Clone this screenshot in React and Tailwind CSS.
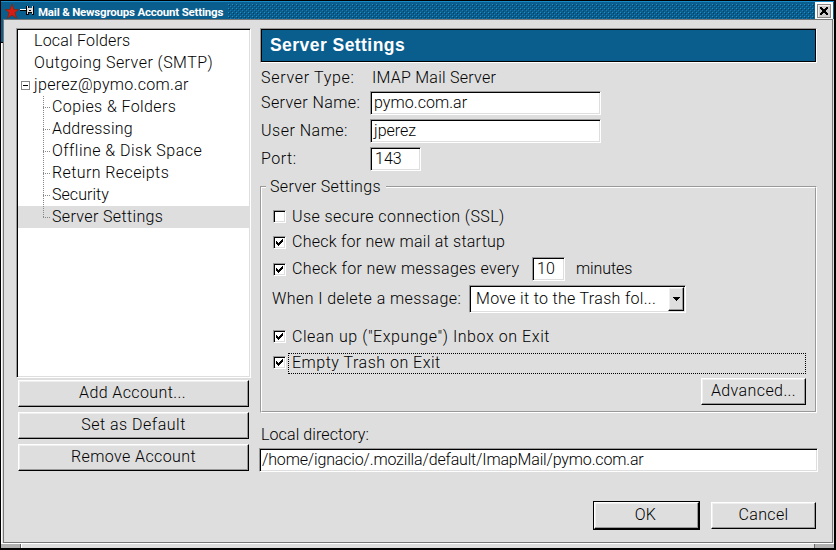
import React from 'react';

const btn =
  'flex items-center justify-center bg-[#dedede] border border-t-white border-l-white border-r-black border-b-black shadow-[inset_-1px_-1px_0_#999,inset_1px_1px_0_#efefef]';
const sunken =
  'flex items-center bg-white border border-t-[#999] border-l-[#999] border-r-white border-b-white shadow-[inset_1px_1px_0_#000,inset_-1px_-1px_0_#dedede]';

function Check({ on }) {
  return (
    <span className={`${sunken} h-[13px] w-[13px] shrink-0`}>
      {on && (
        <svg width="11" height="11" viewBox="0 0 11 11" shapeRendering="crispEdges">
          <path d="M2 4h1v3H2zM3 5h1v3H3zM4 6h1v3H4zM5 5h1v3H5zM6 4h1v3H6zM7 3h1v3H7zM8 2h1v3H8z" />
        </svg>
      )}
    </span>
  );
}

const nodes = [
  ['Copies & Folders', 'tracking-[0.4px]'],
  ['Addressing', 'tracking-[0.2px]'],
  ['Offline & Disk Space', 'tracking-[0.47px]'],
  ['Return Receipts', 'tracking-[0.4px]'],
  ['Security', 'tracking-[0.05px]'],
  ['Server Settings', 'tracking-[0.36px]'],
];

function TitleBar() {
  return (
    <div className="flex h-[18px] border-t border-t-[#1b8cc8] bg-[#0a5e8e] pl-[2px]">
      <svg width="33" height="17" viewBox="3 2 33 17" className="shrink-0">
        <path d="M12 4l1.900 5.500h5l-4 3 1.800 6-4.700-3.400-4.700 3.400 1.800-6-4-3h5z" fill="#d81c14" stroke="#7a2c16" strokeWidth=".9" />
        <g shapeRendering="crispEdges">
          <path d="M20 9h7v1h-7z" fill="#fff" />
          <path d="M20 10h7v1h-7z" fill="#000" />
          <path d="M26 6h3v2h3V6h2v9h-2v-2h-3v2h-3z" fill="#000" />
          <path d="M27 6h1v2h4V6h1v8h-1v-2h-4v2h-1z" fill="#dedede" />
          <path d="M29 10h2v1h-2z" fill="#000" />
        </g>
      </svg>
      <span className="ml-[2px] mt-[2px] w-[190px] shrink-0 whitespace-nowrap font-['Roboto'] text-[11.5px] font-bold leading-[17px] tracking-[-0.2px] text-white">
        Mail &amp; Newsgroups Account Settings
      </span>
      <svg width="586" height="15" className="mt-[2px] shrink-0" shapeRendering="crispEdges">
        <defs>
          <pattern id="dots" width="4" height="4" patternUnits="userSpaceOnUse">
            <path d="M0 0h1v1H0z" fill="#2390cc" />
            <path d="M2 2h1v1H2z" fill="#1a7db5" />
            <path d="M1 1h1v1H1z" fill="#063a5b" />
            <path d="M3 3h1v1H3z" fill="#084a70" />
          </pattern>
        </defs>
        <rect width="586" height="15" fill="url(#dots)" />
      </svg>
      <svg width="18" height="17" className="ml-[1px] shrink-0" shapeRendering="crispEdges">
        <path d="M0 0h18v17H0z" fill="#fff" />
        <path d="M2 2h14v14H2z" fill="#8c8888" />
        <path d="M3 3h12v12H3z" fill="#f4f0f0" />
        <path d="M4 4h11v11H4z" fill="#d2cece" />
        <path d="M5 5h2v1h1v1h2V6h1V5h2v2h-1v1h-1v2h1v1h1v2h-2v-1h-1v-1H8v1H7v1H5v-2h1v-1h1V8H6V7H5z" fill="#000" />
      </svg>
    </div>
  );
}

function AccountTree() {
  return (
    <div className="h-[350px] w-[235px] border border-t-[#999] border-l-[#999] border-r-white border-b-white bg-white shadow-[inset_1px_1px_0_#000,inset_-1px_-1px_0_#dedede]">
      <div className="mt-px ml-px mr-px">
        <div className="h-[22px] pl-[16px] tracking-[0.2px]">Local Folders</div>
        <div className="h-[22px] pl-[16px] tracking-[0.46px]">Outgoing Server (SMTP)</div>
        <div className="flex h-[22px] items-center">
          <svg width="9" height="9" className="ml-[3px] mr-[4px] shrink-0" shapeRendering="crispEdges">
            <path d="M0 0h9v9H0z" fill="#888" />
            <path d="M1 1h7v7H1z" fill="#fff" />
            <path d="M2 4h5v1H2z" />
          </svg>
          <span className="tracking-[0.3px]">jperez@pymo.com.ar</span>
        </div>
        {nodes.map(([n, t], i) => (
          <div key={n} className={`flex h-[22px] ${i === 5 ? 'bg-[#dedede]' : ''}`}>
            <svg width="34" height="22" className="shrink-0" shapeRendering="crispEdges">
              <path d={i === 5 ? 'M25.500 0V12' : 'M25.500 0V22'} stroke="#888" strokeDasharray="1 1" />
              <path d="M25 11.500H33" stroke="#888" strokeDasharray="1 1" />
            </svg>
            <span className={t}>{n}</span>
          </div>
        ))}
      </div>
    </div>
  );
}

export default function App() {
  return (
    <div className="h-[550px] w-[836px] overflow-hidden whitespace-nowrap border-l border-t border-b-2 border-r-2 border-black bg-[#dedede] font-['Roboto'] text-[16px] font-light leading-[22px] text-black">
      <TitleBar />
      <div className="flex h-[524px]">
        <div className="w-[2px] shrink-0">
          <div className="h-[23px] bg-[#0a5e8e]" />
          <div className="h-px bg-black" />
          <div className="h-[500px] border-l border-white bg-[#dedede]" />
        </div>
        <div className="flex h-[524px] w-[830px] shrink-0 border border-[#777]">
          <div className="ml-[12px] mt-[8px] w-[235px] shrink-0">
            <AccountTree />
            <div className="ml-[2px] mt-[2px] flex w-[231px] flex-col gap-[5px]">
              <div className={`${btn} h-[27px] pb-[2px] pr-[2px] tracking-[0.4px]`}>Add Account...</div>
              <div className={`${btn} h-[27px] pb-[2px] tracking-[0.5px]`}>Set as Default</div>
              <div className={`${btn} h-[27px] pb-[2px] tracking-[0.4px]`}>Remove Account</div>
            </div>
          </div>
          <div className="ml-[8px] mt-[8px] w-[559px] shrink-0">
            <div className="ml-px w-[557px] border border-t-[#999] border-l-[#999] border-b-white border-r-white">
              <div className="h-[33px] border border-black bg-[#0a5e8e] pl-[8px] font-['Liberation_Sans'] text-[17.5px] font-bold leading-[31px] tracking-[0.45px] text-white">
                Server Settings
              </div>
            </div>
            <div className="ml-[2px] mt-[4px] flex h-[22px]">
              <span className="w-[111px] tracking-[0.7px]">Server Type:</span>
              <span className="tracking-[0.25px]">IMAP Mail Server</span>
            </div>
            <div className="ml-[2px] mt-[2px] flex h-[24px] items-center">
              <span className="w-[109px] tracking-[0.42px]">Server Name:</span>
              <span className={`${sunken} h-[24px] w-[231px] pl-[3px] tracking-[0.05px]`}>pymo.com.ar</span>
            </div>
            <div className="ml-[2px] mt-[4px] flex h-[24px] items-center">
              <span className="w-[109px] tracking-[0.5px]">User Name:</span>
              <span className={`${sunken} h-[24px] w-[231px] pl-[3px] tracking-[0px]`}>jperez</span>
            </div>
            <div className="ml-[2px] mt-[4px] flex h-[24px] items-center">
              <span className="w-[109px] tracking-[0.5px]">Port:</span>
              <span className={`${sunken} h-[24px] w-[51px] pl-[4px] tracking-[0px]`}>143</span>
            </div>
            <div className="ml-px mt-[15px] h-[227px] w-[557px] border border-t-[#999] border-l-[#999] border-b-white border-r-white">
              <div className="h-[225px] border border-t-white border-l-white border-b-[#999] border-r-[#999]">
                <div className="-mt-[12px] ml-[4px] h-[22px] w-[120px] bg-[#dedede] pl-[4px]">
                  <span className="tracking-[0.33px]">Server Settings</span>
                </div>
                <div className="ml-[11px] mt-[7px] flex h-[23px] items-center">
                  <Check />
                  <span className="ml-[6px] tracking-[0.43px]">Use secure connection (SSL)</span>
                </div>
                <div className="ml-[11px] mt-[3px] flex h-[23px] items-center">
                  <Check on />
                  <span className="ml-[6px] pb-px tracking-[0.25px]">Check for new mail at startup</span>
                </div>
                <div className="ml-[11px] mt-[3px] flex h-[24px] items-center">
                  <Check on />
                  <span className="ml-[6px] w-[240px] tracking-[0.35px]">Check for new messages every</span>
                  <span className={`${sunken} h-[24px] w-[33px] pl-[4px] tracking-[0.2px]`}>10</span>
                  <span className="ml-[11px] tracking-[-0.1px]">minutes</span>
                </div>
                <div className="ml-[10px] mt-[4px] flex h-[28px] items-center">
                  <span className="w-[197px] tracking-[0.43px]">When I delete a message:</span>
                  <span className={`${sunken} h-[28px] w-[217px] justify-between pl-[6px] pr-px`}>
                    <span className="tracking-[0.32px]">Move it to the Trash fol...</span>
                    <span className={`${btn} h-[24px] w-[16px]`}>
                      <svg width="7" height="4" shapeRendering="crispEdges">
                        <path d="M0 0h7v1H6v1H5v1H4v1H3V3H2V2H1V1H0z" />
                      </svg>
                    </span>
                  </span>
                </div>
                <div className="ml-[11px] mt-[12px] flex h-[23px] items-center">
                  <Check on />
                  <span className="ml-[6px] tracking-[0.57px]">Clean up ("Expunge") Inbox on Exit</span>
                </div>
                <div className="ml-[11px] mt-[5px] flex h-[21px] items-center">
                  <span className="-mt-[2px]">
                    <Check on />
                  </span>
                  <span className="ml-[2px] h-[21px] w-[518px] border border-dotted border-black pl-[3px] leading-[18px] tracking-[0.5px]">
                    Empty Trash on Exit
                  </span>
                </div>
                <div className="mr-[9px] mt-[4px] flex justify-end">
                  <div className={`${btn} h-[27px] w-[105px] pb-px tracking-[0.4px]`}>Advanced...</div>
                </div>
              </div>
            </div>
            <div className="ml-[2px] mt-[11px] h-[22px] tracking-[0.1px]">Local directory:</div>
            <div className={`${sunken} mt-[2px] h-[24px] w-[559px] pl-[2px] tracking-[-0.16px]`}>
              /home/ignacio/.mozilla/default/ImapMail/pymo.com.ar
            </div>
            <div className="mr-[2px] mt-[29px] flex items-center justify-end gap-[11px]">
              <div className="border border-black">
                <div className={`${btn} h-[27px] w-[105px] pb-[2px] pr-[2px] tracking-[0.4px]`}>OK</div>
              </div>
              <div className={`${btn} h-[27px] w-[105px] pb-[2px] tracking-[0.35px]`}>Cancel</div>
            </div>
          </div>
        </div>
      </div>
      <div className="flex h-[5px] border-t border-white">
        <div className="w-[19px] bg-[#b0b0b0]" />
        <div className="w-px bg-[#666]" />
        <div className="w-[793px] border-l border-white" />
        <div className="w-px bg-[#666]" />
        <div className="flex-1 bg-[#b0b0b0]" />
      </div>
    </div>
  );
}
